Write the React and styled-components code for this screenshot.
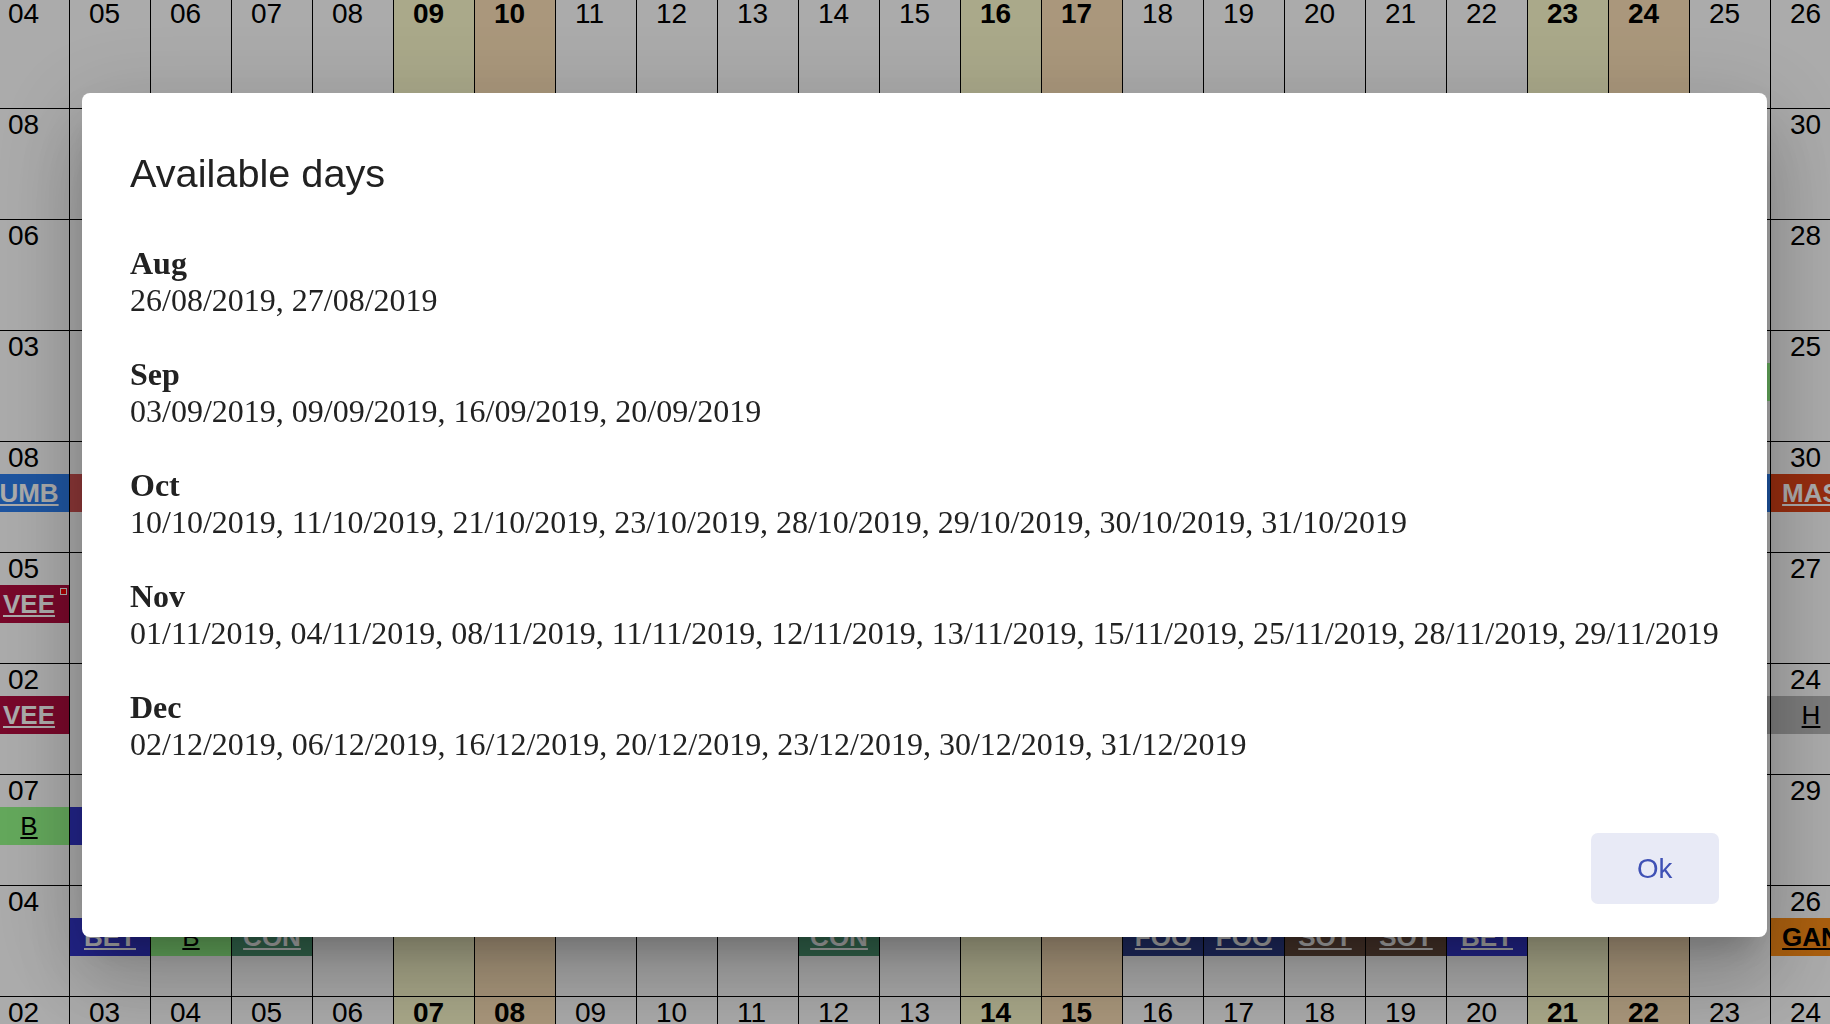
import React from "react";
import styled, { createGlobalStyle } from "styled-components";

const GlobalStyle = createGlobalStyle`
  html, body {
    margin: 0;
    padding: 0;
    height: 100%;
    overflow: hidden;
  }
  body {
    font-family: "Liberation Serif", "Times New Roman", serif;
    background: #fff;
  }
`;

const Page = styled.div`
  height: 100vh;
  overflow: hidden;
`;

// the planner is scrolled a little, so the first row and column are cut
const Calendar = styled.div`
  margin: -2px 0 0 -11px;
  width: max-content;
`;

const Row = styled.div`
  display: flex;
`;

const dayBg = {
  sat: "#fefcce",
  sun: "#fee2b9",
  week: "#ffffff",
};

const Cell = styled.div`
  flex: 0 0 81px;
  height: 111px;
  box-sizing: border-box;
  border-right: 1px solid #000;
  border-bottom: 1px solid #000;
  background: ${(props) => dayBg[props.$kind]};
  font-family: "Liberation Sans", Arial, sans-serif;
  overflow: hidden;
`;

const DayNumber = styled.div`
  padding-left: 19px;
  font-size: 28px;
  line-height: 32px;
  font-weight: ${(props) => (props.$bold ? 700 : 400)};
  color: #000;
`;

const EventBar = styled.div`
  position: relative;
  height: 38px;
  line-height: 38px;
  background: ${(props) => props.$bg};
  color: ${(props) => props.$fg};
  text-align: center;
  white-space: nowrap;
  overflow: hidden;
  font-size: 26px;
  font-weight: ${(props) => (props.$light ? 400 : 700)};
  text-decoration: underline;
`;

const Marker = styled.span`
  position: absolute;
  top: 3px;
  right: 2px;
  width: 5px;
  height: 5px;
  border: 1px solid #fff;
  background: #f00;
`;

const Backdrop = styled.div`
  position: fixed;
  inset: 0;
  background: rgba(0, 0, 0, 0.33);
`;

const DialogLayer = styled.div`
  position: fixed;
  inset: 0;
  display: flex;
  align-items: flex-start;
  justify-content: flex-start;
  padding: 93px 0 0 82px;
`;

const Dialog = styled.div`
  display: flex;
  flex-direction: column;
  background: #fff;
  border-radius: 8px;
  box-shadow: 0 22px 30px -14px rgba(0, 0, 0, 0.2),
    0 48px 76px 6px rgba(0, 0, 0, 0.14), 0 18px 92px 16px rgba(0, 0, 0, 0.12);
`;

const Title = styled.h2`
  margin: 0;
  padding: 56px 48px 0;
  font-family: "Liberation Sans", Arial, sans-serif;
  font-weight: 400;
  font-size: 39.7px;
  line-height: 48px;
  color: #212121;
`;

const Content = styled.div`
  padding: 48px 48px 0;
  font-family: "Liberation Serif", "Times New Roman", serif;
  font-size: 32px;
  line-height: 37px;
  color: #222;
`;

const MonthBlock = styled.div`
  margin-bottom: 37px;
  &:last-child {
    margin-bottom: 0;
  }
`;

const MonthName = styled.div`
  font-weight: 700;
`;

const Dates = styled.div`
  white-space: nowrap;
`;

const Actions = styled.div`
  display: flex;
  justify-content: flex-end;
  padding: 70px 48px 33px;
`;

const OkButton = styled.button`
  width: 128px;
  height: 71px;
  padding: 0;
  border: 0;
  border-radius: 7px;
  background: #e8eaf6;
  color: #3f51b5;
  font-family: "Liberation Sans", Arial, sans-serif;
  font-size: 27.7px;
  cursor: pointer;
`;

const rowStarts = [4, 8, 6, 3, 8, 5, 2, 7, 4, 2];
const COLS = 23;

const colors = {
  blue: "#2d7fef",
  red: "#d15252",
  crimson: "#b30c3f",
  green: "#95fb89",
  indigo: "#3336ce",
  rust: "#e04316",
  grey: "#b8b8b8",
  pine: "#4a9571",
  navy: "#2c3d8c",
  brown: "#664a3c",
  orange: "#fe8e16",
};

const events = {
  "3-21": { label: "B", bg: colors.green, fg: "#000", light: true },
  "4-0": { label: "UMB", bg: colors.blue, fg: "#fff" },
  "4-1": { label: "LIO", bg: colors.red, fg: "#fff" },
  "4-21": { label: "UMB", bg: colors.blue, fg: "#fff" },
  "4-22": { label: "MAS", bg: colors.rust, fg: "#fff" },
  "5-0": { label: "VEE", bg: colors.crimson, fg: "#fff", marker: true },
  "6-0": { label: "VEE", bg: colors.crimson, fg: "#fff" },
  "6-21": { label: "H", bg: colors.grey, fg: "#000", light: true },
  "6-22": { label: "H", bg: colors.grey, fg: "#000", light: true },
  "7-0": { label: "B", bg: colors.green, fg: "#000", light: true },
  "7-1": { label: "BET", bg: colors.indigo, fg: "#fff" },
  "8-1": { label: "BET", bg: colors.indigo, fg: "#fff" },
  "8-2": { label: "B", bg: colors.green, fg: "#000", light: true },
  "8-3": { label: "CON", bg: colors.pine, fg: "#fff" },
  "8-10": { label: "CON", bg: colors.pine, fg: "#fff" },
  "8-14": { label: "FOO", bg: colors.navy, fg: "#fff" },
  "8-15": { label: "FOO", bg: colors.navy, fg: "#fff" },
  "8-16": { label: "SOT", bg: colors.brown, fg: "#fff" },
  "8-17": { label: "SOT", bg: colors.brown, fg: "#fff" },
  "8-18": { label: "BET", bg: colors.indigo, fg: "#fff" },
  "8-22": { label: "GAN", bg: colors.orange, fg: "#000" },
};

const months = [
  { name: "Aug", dates: ["26/08/2019", "27/08/2019"] },
  {
    name: "Sep",
    dates: ["03/09/2019", "09/09/2019", "16/09/2019", "20/09/2019"],
  },
  {
    name: "Oct",
    dates: [
      "10/10/2019",
      "11/10/2019",
      "21/10/2019",
      "23/10/2019",
      "28/10/2019",
      "29/10/2019",
      "30/10/2019",
      "31/10/2019",
    ],
  },
  {
    name: "Nov",
    dates: [
      "01/11/2019",
      "04/11/2019",
      "08/11/2019",
      "11/11/2019",
      "12/11/2019",
      "13/11/2019",
      "15/11/2019",
      "25/11/2019",
      "28/11/2019",
      "29/11/2019",
    ],
  },
  {
    name: "Dec",
    dates: [
      "02/12/2019",
      "06/12/2019",
      "16/12/2019",
      "20/12/2019",
      "23/12/2019",
      "30/12/2019",
      "31/12/2019",
    ],
  },
];

function dayKind(col) {
  const pos = col % 7;
  if (pos === 5) return "sat";
  if (pos === 6) return "sun";
  return "week";
}

const Planner = () => (
  <Calendar>
    {rowStarts.map((start, row) => (
      <Row key={row}>
        {Array.from({ length: COLS }, (_, col) => {
          const kind = dayKind(col);
          const ev = events[`${row}-${col}`];
          return (
            <Cell key={col} $kind={kind}>
              <DayNumber $bold={kind !== "week"}>
                {String(start + col).padStart(2, "0")}
              </DayNumber>
              {ev && (
                <EventBar $bg={ev.bg} $fg={ev.fg} $light={ev.light}>
                  {ev.label}
                  {ev.marker && <Marker />}
                </EventBar>
              )}
            </Cell>
          );
        })}
      </Row>
    ))}
  </Calendar>
);

export default function App() {
  return (
    <Page>
      <GlobalStyle />
      <Planner />
      <Backdrop />
      <DialogLayer>
        <Dialog role="dialog">
          <Title>Available days</Title>
          <Content>
            {months.map((m) => (
              <MonthBlock key={m.name}>
                <MonthName>{m.name}</MonthName>
                <Dates>{m.dates.join(", ")}</Dates>
              </MonthBlock>
            ))}
          </Content>
          <Actions>
            <OkButton>Ok</OkButton>
          </Actions>
        </Dialog>
      </DialogLayer>
    </Page>
  );
}
